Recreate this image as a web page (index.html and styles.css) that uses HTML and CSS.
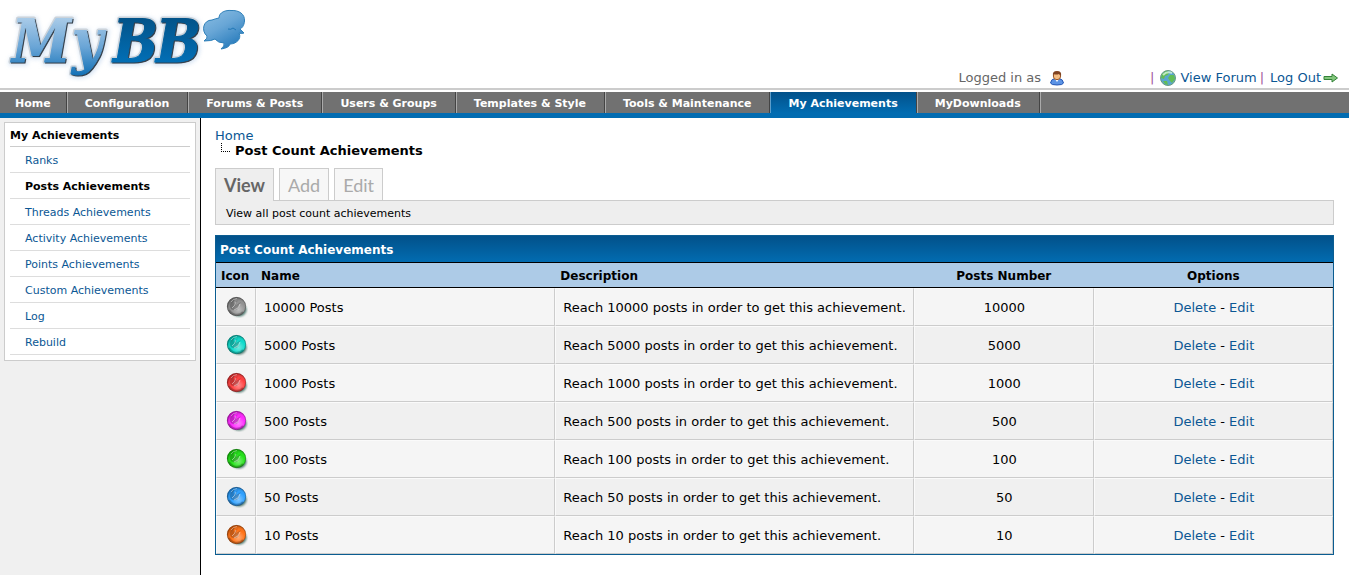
FILE: index.html
```html
<!DOCTYPE html>
<html lang="en">
<head>
<meta charset="utf-8">
<title>Post Count Achievements</title>
<link rel="stylesheet" href="styles.css">
</head>
<body>
<svg class="defs" aria-hidden="true">
  <defs>
    <linearGradient id="light" gradientUnits="userSpaceOnUse" x1="0" y1="18" x2="0" y2="76"><stop offset="0" stop-color="#a9cbe8"/><stop offset=".5" stop-color="#6aa5d6"/><stop offset="1" stop-color="#1070b6"/></linearGradient>
    <linearGradient id="dark" gradientUnits="userSpaceOnUse" x1="0" y1="18" x2="0" y2="63"><stop offset="0" stop-color="#025389"/><stop offset="1" stop-color="#026fb6"/></linearGradient>
    <linearGradient id="cloud" x1="0" y1="0" x2=".6" y2="1"><stop offset="0" stop-color="#8dbfe4"/><stop offset=".5" stop-color="#68a6d6"/><stop offset="1" stop-color="#2a7dbd"/></linearGradient>
    <radialGradient id="shine" cx=".6" cy=".65" r=".6"><stop offset="0" stop-color="#fff" stop-opacity=".45"/><stop offset=".6" stop-color="#fff" stop-opacity=".05"/><stop offset="1" stop-color="#000" stop-opacity=".25"/></radialGradient>
    <filter id="soft" x="-20%" y="-20%" width="140%" height="140%"><feGaussianBlur stdDeviation="1"/></filter>
    <symbol id="medal" viewBox="0 0 22 22">
      <ellipse cx="13" cy="14" rx="7.500" ry="6.500" fill="#063f33" opacity=".7" filter="url(#soft)"/>
      <circle cx="10.500" cy="10.500" r="9.500" fill="currentColor"/>
      <circle cx="10.500" cy="10.500" r="9.500" fill="url(#shine)"/>
      <path d="M3 14A8.500 8.500 0 0 0 17 16" fill="none" stroke="#000" stroke-opacity=".25" stroke-width="2"/>
      <circle cx="10.500" cy="10.500" r="9.200" fill="none" stroke="#000" stroke-opacity=".25"/>
      <path d="M4 10Q4 5 9 3Q7 6 8 8L12 4Q10 7 10 9L15 6Q12 9 13 11Q11 15 7 14Q4 13 4 10Z" fill="#000" opacity=".22"/>
      <path d="M6 12Q9 10 10 6M8 14Q13 13 14 8" fill="none" stroke="#fff" stroke-opacity=".45"/>
      <path d="M5 6Q7 3 11 2.500" fill="none" stroke="#fff" stroke-opacity=".4"/>
    </symbol>
  </defs>
</svg>
<header class="top">
  <svg class="logo" width="250" height="82" viewBox="0 0 250 82" role="img" aria-label="MyBB">
    <g class="logo-glow"><text x="13" y="63">M</text><text x="73" y="63">y</text><text x="114" y="63">B</text><text x="157" y="63">B</text></g>
    <g class="logo-edge"><text x="12" y="62">M</text><text x="72" y="62">y</text><text x="113" y="62">B</text><text x="156" y="62">B</text></g>
    <g class="logo-shade"><text x="13" y="63">M</text><text x="73" y="63">y</text><text x="114" y="63">B</text><text x="157" y="63">B</text></g>
    <g class="logo-face"><text class="pale" x="12" y="62">M</text><text class="pale" x="72" y="62">y</text><text class="deep" x="113" y="62">B</text><text class="deep" x="156" y="62">B</text></g>
    <path d="M219 18C219 12 226 10 231 10.500C239 10 245 14 244.500 21C244 26 242 28 240 29L244 33Q241 34 239 33C242 39 236 44 230 44Q229 48 221 49Q225 46 224 43Q218 43 215 39Q212 41 204 41Q208 38 207 36C201 31 203 20 212 20Q216 18.500 219 18Z" fill="url(#cloud)" stroke="#2f80b9"/>
    <path d="M228 29Q231 30 233 28L236 30" fill="none" stroke="#2177b5"/>
  </svg>
  <div class="account">
    <span class="who">Logged in as
      <svg width="16" height="16" viewBox="0 0 16 16"><path d="M1.500 13Q2 9 6 8.500H10Q14 9 14.500 13Q14 15 8 15Q2 15 1.500 13Z" fill="#5b93e5" stroke="#2658b5"/><path d="M6 9L8 12L10 9" fill="#fff"/><circle cx="8" cy="6" r="3.700" fill="#f4bd83" stroke="#9b5727"/><path d="M4 6Q3 1 8 1Q13 1 12 6L10 4Q7 5 5 4Z" fill="#804321"/></svg>
    </span>
    <span class="bar">|</span>
    <a class="forum" href="#"><svg width="16" height="16" viewBox="0 0 16 16"><circle cx="8" cy="8" r="7.500" fill="#5aa6d0" stroke="#6a9a80"/><path d="M2 4L6 1L9 2L8 5L5 6L4 9L1 8ZM10 5L14 5L15 9L12 13L10 11L8 8ZM3 11L7 11L8 15L5 14Z" fill="#62bd54"/><path d="M3 5Q7 1 12 3" fill="none" stroke="#d8f5df" stroke-opacity=".8" stroke-width="2"/></svg>View Forum</a>
    <span class="bar second">|</span>
    <a class="logout" href="#">Log Out<svg width="16" height="10" viewBox="0 0 16 10"><path d="M1 3.500H9V1L14.500 5L9 9V6.500H1Z" fill="#83c67c" stroke="#338238"/></svg></a>
  </div>
</header>
<nav class="menu">
  <a href="#">Home</a><a href="#">Configuration</a><a href="#">Forums &amp; Posts</a><a href="#">Users &amp; Groups</a><a href="#">Templates &amp; Style</a><a href="#">Tools &amp; Maintenance</a><a class="active" href="#">My Achievements</a><a href="#">MyDownloads</a>
</nav>
<div class="page">
  <aside class="side">
    <div class="box">
      <h2>My Achievements</h2>
      <ul>
        <li><a href="#">Ranks</a></li>
        <li><a class="active" href="#">Posts Achievements</a></li>
        <li><a href="#">Threads Achievements</a></li>
        <li><a href="#">Activity Achievements</a></li>
        <li><a href="#">Points Achievements</a></li>
        <li><a href="#">Custom Achievements</a></li>
        <li><a href="#">Log</a></li>
        <li><a href="#">Rebuild</a></li>
      </ul>
    </div>
  </aside>
  <main>
    <div class="crumb"><a href="#">Home</a></div>
    <h1><span class="branch"></span>Post Count Achievements</h1>
    <div class="tabs"><a class="active" href="#">View</a><a href="#">Add</a><a href="#">Edit</a></div>
    <p class="hint">View all post count achievements</p>
    <section class="panel">
      <h2>Post Count Achievements</h2>
      <table>
        <colgroup><col class="c-icon"><col class="c-name"><col class="c-desc"><col class="c-num"><col></colgroup>
        <thead><tr><th>Icon</th><th>Name</th><th>Description</th><th class="mid">Posts Number</th><th class="mid">Options</th></tr></thead>
        <tbody>
          <tr><td class="grey"><svg width="22" height="22"><use href="#medal"/></svg></td><td>10000 Posts</td><td>Reach 10000 posts in order to get this achievement.</td><td class="mid">10000</td><td class="mid"><a href="#">Delete</a> - <a href="#">Edit</a></td></tr>
          <tr><td class="teal"><svg width="22" height="22"><use href="#medal"/></svg></td><td>5000 Posts</td><td>Reach 5000 posts in order to get this achievement.</td><td class="mid">5000</td><td class="mid"><a href="#">Delete</a> - <a href="#">Edit</a></td></tr>
          <tr><td class="red"><svg width="22" height="22"><use href="#medal"/></svg></td><td>1000 Posts</td><td>Reach 1000 posts in order to get this achievement.</td><td class="mid">1000</td><td class="mid"><a href="#">Delete</a> - <a href="#">Edit</a></td></tr>
          <tr><td class="pink"><svg width="22" height="22"><use href="#medal"/></svg></td><td>500 Posts</td><td>Reach 500 posts in order to get this achievement.</td><td class="mid">500</td><td class="mid"><a href="#">Delete</a> - <a href="#">Edit</a></td></tr>
          <tr><td class="green"><svg width="22" height="22"><use href="#medal"/></svg></td><td>100 Posts</td><td>Reach 100 posts in order to get this achievement.</td><td class="mid">100</td><td class="mid"><a href="#">Delete</a> - <a href="#">Edit</a></td></tr>
          <tr><td class="blue"><svg width="22" height="22"><use href="#medal"/></svg></td><td>50 Posts</td><td>Reach 50 posts in order to get this achievement.</td><td class="mid">50</td><td class="mid"><a href="#">Delete</a> - <a href="#">Edit</a></td></tr>
          <tr><td class="orange"><svg width="22" height="22"><use href="#medal"/></svg></td><td>10 Posts</td><td>Reach 10 posts in order to get this achievement.</td><td class="mid">10</td><td class="mid"><a href="#">Delete</a> - <a href="#">Edit</a></td></tr>
        </tbody>
      </table>
    </section>
  </main>
</div>
</body>
</html>
```
FILE: styles.css
```css
* { box-sizing: border-box; }
body { margin: 0; min-height: 100vh; display: flex; flex-direction: column; background: #fff; color: #000; font: 13px/16px Verdana, "DejaVu Sans", sans-serif; }
a { color: #0b5794; text-decoration: none; }
h1, h2, p, ul { margin: 0; padding: 0; }
.defs { position: absolute; width: 0; height: 0; }

.top { display: flex; justify-content: space-between; align-items: flex-end; height: 90px; border-bottom: 2px solid #ccc; }
.logo { align-self: flex-start; display: block; }
.logo text { font: italic bold 59px "DejaVu Serif Condensed", "DejaVu Serif", serif; }
.logo-glow { fill: #c5d8ee; stroke: #d5e3f3; stroke-width: 5px; filter: blur(2px); }
.logo-edge { fill: #ccd3da; stroke: #ccd3da; stroke-width: 4px; stroke-linejoin: round; }
.logo-shade { fill: #333f4b; stroke: #333f4b; stroke-width: 1px; }
.pale { fill: url(#light); stroke: url(#light); }
.deep { fill: url(#dark); stroke: url(#dark); }
.account { display: flex; align-items: center; padding: 0 10px 2px 0; color: #666; }
.who { display: flex; align-items: center; gap: 8px; margin-right: 85px; }
.bar { color: #a0529a; margin-right: 6px; }
.second { margin: 0 6px 0 3px; }
.forum { display: flex; align-items: center; gap: 4px; }
.logout { display: flex; align-items: center; gap: 2px; }

.menu { display: flex; margin-top: 2px; height: 26px; background: #717171; border-bottom: 5px solid #026cb1; }
.menu a { padding: 2px 18px 0 17px; border-left: 1px solid #aaa; border-right: 1px solid #444; color: #fff; font-size: 11px; font-weight: bold; line-height: 19px; }
.menu a:first-child { padding: 2px 15px 0 14px; border-left-color: #717171; }
.menu a:last-child { box-shadow: 1px 0 #aaa; }
.menu .active { background: linear-gradient(#02518a, #026cb1); border-left-color: #5b9dcb; }

.page { flex: 1; display: flex; }
.side { flex: none; width: 201px; padding: 4px; background: #f0f0f0; border-right: 1px solid #000; }
.box { padding: 0 5px 5px; background: #fff; border: 1px solid #ccc; }
.box h2 { padding-top: 2px; font-size: 11px; line-height: 21px; border-bottom: 1px solid #ccc; }
.box ul { list-style: none; }
.box li { padding: 2px 0 0 15px; font-size: 11px; line-height: 23px; border-bottom: 1px solid #ddd; }
.box .active { color: #000; font-weight: bold; }

main { flex: 1; min-width: 0; padding: 10px 15px 20px 14px; }
.crumb { line-height: 15px; }
h1 { display: flex; font-size: 13px; line-height: 15px; }
.branch { width: 9px; height: 9px; margin: 0 5px 0 6px; border-left: 1px dotted #000; border-bottom: 1px dotted #000; }
.tabs { display: flex; gap: 5px; margin-top: 10px; }
.tabs a { height: 32px; padding: 0 8px; border: 1px solid #ccc; border-bottom: 0; background: #f7f7f7; color: #aaa; font: 18px/32px Lato, sans-serif; }
.tabs .active { height: 33px; margin-bottom: -1px; background: #eee; color: #666; font-weight: bold; z-index: 1; }
.hint { padding: 2px 10px 0; background: #eee; border: 1px solid #ccc; font-size: 11px; line-height: 21px; }
.panel { margin-top: 10px; border: 1px solid #0b5d91; }
.panel h2 { padding: 2px 4px 0; color: #fff; background: linear-gradient(#02518a, #026cb1); border-bottom: 1px solid #000; font-size: 12px; line-height: 24px; }
table { width: 100%; table-layout: fixed; border-collapse: separate; border-spacing: 0; }
.c-icon { width: 40px; }
.c-name { width: 26.8%; }
.c-desc { width: 32.1%; }
.c-num { width: 16.1%; }
th { padding: 2px 5px 0; height: 25px; text-align: left; background: #adcbe7; border-bottom: 1px solid #000; font-size: 12px; }
td { height: 38px; padding: 2px 6px 0 7px; background: #f5f5f5; border: 1px solid; border-color: #fafafa #ccc #ccc #fafafa; }
tr:nth-child(even) td { background: #f0f0f0; }
td:first-child { padding: 0 0 0 9px; }
td svg { display: block; }
.mid { text-align: center; }
.grey { color: #8c8c8c; }
.teal { color: #00d8c8; }
.red { color: #ff3434; }
.pink { color: #ff1cff; }
.green { color: #16e00b; }
.blue { color: #229bff; }
.orange { color: #ff6a09; }
```
